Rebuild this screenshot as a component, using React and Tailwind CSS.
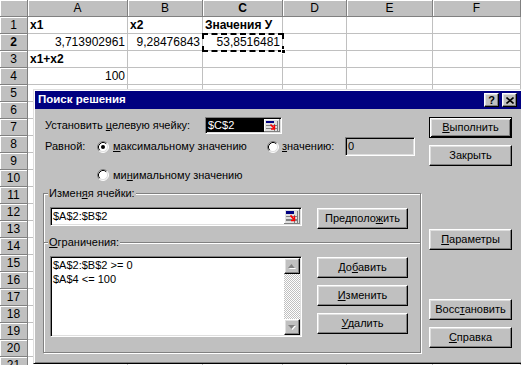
import React from "react";

const raised =
  "border border-t-white border-l-white border-r-black border-b-black shadow-[inset_-1px_-1px_0_#808080,inset_1px_1px_0_#dfdfdf]";
const defBtn =
  "border border-black shadow-[inset_1px_1px_0_#fff,inset_-1px_-1px_0_#000,inset_2px_2px_0_#dfdfdf,inset_-2px_-2px_0_#808080]";
const sunken =
  "border border-t-[#808080] border-l-[#808080] border-r-white border-b-white shadow-[inset_1px_1px_0_#000,inset_-1px_-1px_0_#dfdfdf] p-px";
const etched = "border border-[#808080] shadow-[inset_1px_1px_0_#fff,1px_1px_0_#fff]";

function Btn({ children, className = "", def = false }) {
  return (
    <div className={`flex items-center justify-center h-[21px] bg-[#c0c0c0] ${def ? defBtn : raised} ${className}`}>
      <span className="leading-[13px]">{children}</span>
    </div>
  );
}

function Radio({ checked }) {
  return (
    <svg width="12" height="12" viewBox="0 0 12 12" className="shrink-0">
      <circle cx="6" cy="6" r="5" fill="#fff" />
      <path d="M2.11 9.89A5.5 5.5 0 0 1 9.89 2.11" fill="none" stroke="#808080" />
      <path d="M9.89 2.11A5.5 5.5 0 0 1 2.11 9.89" fill="none" stroke="#fff" />
      <path d="M2.82 9.18A4.5 4.5 0 0 1 9.18 2.82" fill="none" stroke="#000" />
      <path d="M9.18 2.82A4.5 4.5 0 0 1 2.82 9.18" fill="none" stroke="#dfdfdf" />
      {checked && <circle cx="6" cy="6" r="2" fill="#000" />}
    </svg>
  );
}

function RefIcon({ h = 13 }) {
  return (
    <svg width="16" height={h} viewBox="0 0 16 13" preserveAspectRatio="none" className="shrink-0" shapeRendering="crispEdges">
      <rect width="16" height="13" fill="#dfdfdf" />
      <path d="M0 0.5H15M0.5 0V12" stroke="#fff" />
      <path d="M0 12.5H16M15.5 0V13" stroke="#808080" />
      <rect x="2" y="2" width="8" height="2" fill="#000080" />
      <path d="M2 6.5H14M2 9.5H14M10.5 5V12M13.5 2V12" stroke="#808080" />
      <path d="M6.5 5.5L10 9" stroke="#ff0000" strokeWidth="1.6" shapeRendering="auto" />
      <path d="M10.5 6V10H7" stroke="#ff0000" strokeWidth="1.4" fill="none" shapeRendering="auto" />
    </svg>
  );
}

function ScrollBtn({ up }) {
  return (
    <div className={`w-[16px] h-[16px] bg-[#c0c0c0] ${raised} flex items-center justify-center shrink-0`}>
      <svg width="8" height="5" viewBox="0 0 8 5">
        {up ? (
          <>
            <polygon points="4.5,1 8,5 1,5" fill="#fff" />
            <polygon points="3.5,0 7,4 0,4" fill="#808080" />
          </>
        ) : (
          <>
            <polygon points="1,1 8,1 4.5,5" fill="#fff" />
            <polygon points="0,0 7,0 3.5,4" fill="#808080" />
          </>
        )}
      </svg>
    </div>
  );
}

function U({ children }) {
  return <span className="underline underline-offset-[1px]">{children}</span>;
}

const cols = ["A", "B", "C", "D", "E", "F"];
const data = {
  1: { A: { t: "x1", b: true }, B: { t: "x2", b: true }, C: { t: "Значения У", b: true } },
  2: { A: { t: "3,713902961", r: true }, B: { t: "9,28476843", r: true }, C: { t: "53,8516481", r: true } },
  3: { A: { t: "x1+x2", b: true } },
  4: { A: { t: "100", r: true } },
};

const hdr =
  "bg-[#c0c0c0] border-r border-b border-[#808080] shadow-[inset_1px_1px_0_#fff] flex items-center justify-center";

function Sheet() {
  const cells = [];
  cells.push(<div key="corner" className={hdr} />);
  cols.forEach((c) =>
    cells.push(
      <div key={"h" + c} className={`${hdr} ${c === "C" ? "font-bold" : ""}`}>
        {c}
      </div>
    )
  );
  for (let r = 1; r <= 21; r++) {
    cells.push(
      <div key={"r" + r} className={`${hdr} ${r === 2 ? "font-bold" : ""}`}>
        {r}
      </div>
    );
    cols.forEach((c) => {
      const d = data[r] && data[r][c];
      cells.push(
        <div
          key={r + c}
          className={`border-r border-b border-[#c0c0c0] flex items-center px-[2px] overflow-hidden whitespace-nowrap ${
            d && d.r ? "justify-end" : ""
          } ${d && d.b ? "font-bold" : ""}`}
        >
          {d ? d.t : null}
        </div>
      );
    });
  }
  return (
    <div className="grid grid-cols-[28px_100px_75px_80px_64px_86px_88px] auto-rows-[17px]">{cells}</div>
  );
}

export default function App() {
  return (
    <div className="relative w-[521px] h-[365px] overflow-hidden bg-white font-['Liberation_Sans',Arial,sans-serif] text-[12px] leading-none text-black">
      <Sheet />
      {/* copy marquee around C2 */}
      <div className="absolute left-[202px] top-[33px] w-[82px] h-[19px] border-2 border-dashed border-black" />
      <div className="absolute left-[281px] top-[49px] w-[5px] h-[5px] bg-black border border-white" />

      {/* dialog */}
      <div className="absolute left-[33px] top-[89px] w-[492px] h-[275px] bg-[#c0c0c0] border border-t-[#dfdfdf] border-l-[#dfdfdf] border-r-black border-b-black shadow-[inset_1px_1px_0_#fff,inset_-1px_-1px_0_#808080] p-px text-[11px]">
        <div className="h-[18px] bg-[#000080] flex items-center pl-[3px] pr-[6px]">
          <span className="text-white font-bold text-[11.5px] flex-1">Поиск решения</span>
          <div className={`w-[15px] h-[14px] ${raised} bg-[#c0c0c0] flex items-center justify-center font-bold text-[11px]`}>?</div>
          <div className={`ml-[3px] w-[15px] h-[14px] ${raised} bg-[#c0c0c0] flex items-center justify-center`}>
            <svg width="8" height="7" viewBox="0 0 8 7">
              <path d="M0.5 0.5L7.5 6.5M7.5 0.5L0.5 6.5" stroke="#000" strokeWidth="1.6" />
            </svg>
          </div>
        </div>

        <div className="flex pl-[8px] pt-[8px]">
          {/* left column */}
          <div className="w-[378px] flex flex-col">
            <div className="h-[17px] flex items-center">
              <div className="w-[162px] pl-[2px]">
                Установить <U>ц</U>елевую ячейку:
              </div>
              <div className={`w-[77px] h-[17px] ${sunken} flex`}>
                <div className="flex-1 bg-black text-white flex items-center pl-px">$C$2</div>
                <RefIcon h={13} />
              </div>
            </div>

            <div className="mt-[3px] h-[19px] flex items-center">
              <div className="w-[54px] pl-[2px]">Равной:</div>
              <div className="w-[170px] flex items-center gap-[4px]">
                <Radio checked />
                <span>
                  <U>м</U>аксимальному значению
                </span>
              </div>
              <div className="w-[78px] flex items-center gap-[3px]">
                <Radio />
                <span>
                  <U>з</U>начению:
                </span>
              </div>
              <div className={`w-[70px] h-[19px] ${sunken} flex items-center pl-[2px]`}>0</div>
            </div>

            <div className="mt-[11px] h-[16px] flex items-center pl-[54px] gap-[4px]">
              <Radio />
              <span>
                ми<U>н</U>имальному значению
              </span>
            </div>

            <div className={`relative mt-[10px] h-[49px] ${etched} border-b-0`}>
              <div className="absolute left-[4px] top-[-7px] px-px bg-[#c0c0c0] leading-[13px]">
                Измен<U>я</U>я ячейки:
              </div>
              <div className="flex items-start pl-[6px] pt-[13px]">
                <div className={`w-[252px] h-[19px] ${sunken} bg-white flex`}>
                  <div className="flex-1 flex items-center pl-px">$A$2:$B$2</div>
                  <RefIcon h={15} />
                </div>
                <Btn className="ml-[15px] mt-px w-[91px]">
                  Предполо<U>ж</U>ить
                </Btn>
              </div>
            </div>

            <div className={`relative h-[111px] ${etched}`}>
              <div className="absolute left-[4px] top-[-7px] px-px bg-[#c0c0c0] leading-[13px]">
                <U>О</U>граничения:
              </div>
              <div className="flex items-start pl-[6px] pt-[13px]">
                <div className={`w-[252px] h-[81px] ${sunken} bg-white flex`}>
                  <div className="flex-1 pl-px leading-[14px]">
                    <div>$A$2:$B$2 &gt;= 0</div>
                    <div>$A$4 &lt;= 100</div>
                  </div>
                  <div className="w-[16px] flex flex-col">
                    <ScrollBtn up />
                    <div className="flex-1 bg-[image:repeating-conic-gradient(#fff_0_25%,#c0c0c0_0_50%)] bg-[length:2px_2px]" />
                    <ScrollBtn />
                  </div>
                </div>
                <div className="ml-[15px] mt-px w-[91px] flex flex-col gap-[7px]">
                  <Btn>
                    До<U>б</U>авить
                  </Btn>
                  <Btn>
                    <U>И</U>зменить
                  </Btn>
                  <Btn>
                    <U>У</U>далить
                  </Btn>
                </div>
              </div>
            </div>
          </div>

          {/* right column */}
          <div className="ml-[8px] w-[83px] flex flex-col">
            <Btn def>
              <U>В</U>ыполнить
            </Btn>
            <Btn className="mt-[7px]">Закрыть</Btn>
            <Btn className="mt-[63px]">
              <U>П</U>араметры
            </Btn>
            <Btn className="mt-[49px]">
              Восс<U>т</U>ановить
            </Btn>
            <Btn className="mt-[7px]">
              <U>С</U>правка
            </Btn>
          </div>
        </div>
      </div>
    </div>
  );
}
